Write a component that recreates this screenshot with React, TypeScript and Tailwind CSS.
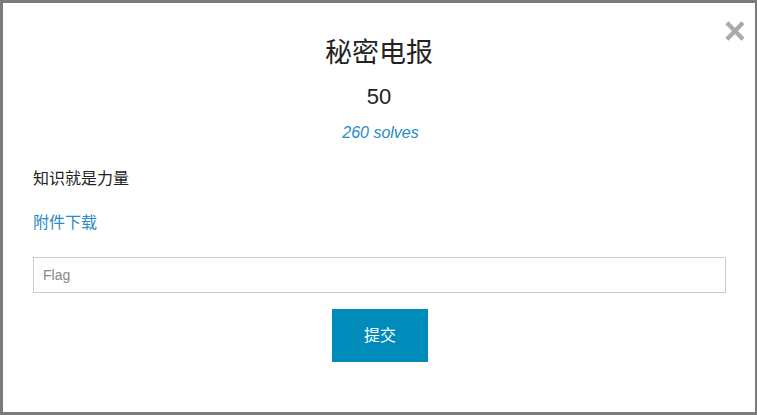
import React from "react";

const App = () => {
  return (
    <div className="w-[757px] h-[415px] bg-[#7b7b7b] pt-[3px] pl-[3px] pr-[2px] pb-[3px] overflow-hidden">
      <div
        className="relative h-full bg-white px-[30px] text-[#222]"
        style={{ fontFamily: '"Liberation Sans", "Noto Sans CJK SC", sans-serif' }}
      >
        <button className="absolute right-[9px] top-[9px] text-[38px] leading-none font-bold text-[#aaa]">
          ×
        </button>

        <div className="pt-[34px] text-center">
          <h3 className="text-[27px] leading-[32px]">秘密电报</h3>
          <div className="mt-[15px] text-[22px] leading-[26px]">50</div>
          <div className="mt-[13px] pl-[3px] text-[16px] leading-[20px] italic text-[#2a8ac4]">260 solves</div>
        </div>

        <p className="mt-[25px] text-[16px] leading-[22px]">知识就是力量</p>
        <a className="block mt-[22px] text-[16px] leading-[22px] text-[#2a8ac4]">附件下载</a>

        <input
          className="mt-[23px] block w-[693px] h-[36px] border border-[#ccc] px-[9px] text-[14px] outline-none placeholder:text-[#888]"
          placeholder="Flag"
        />

        <div className="mt-[16px] pl-[2px] flex justify-center">
          <button className="w-[96px] h-[53px] bg-[#008cba] text-white text-[16px]">提交</button>
        </div>
      </div>
    </div>
  );
};

export default App;
